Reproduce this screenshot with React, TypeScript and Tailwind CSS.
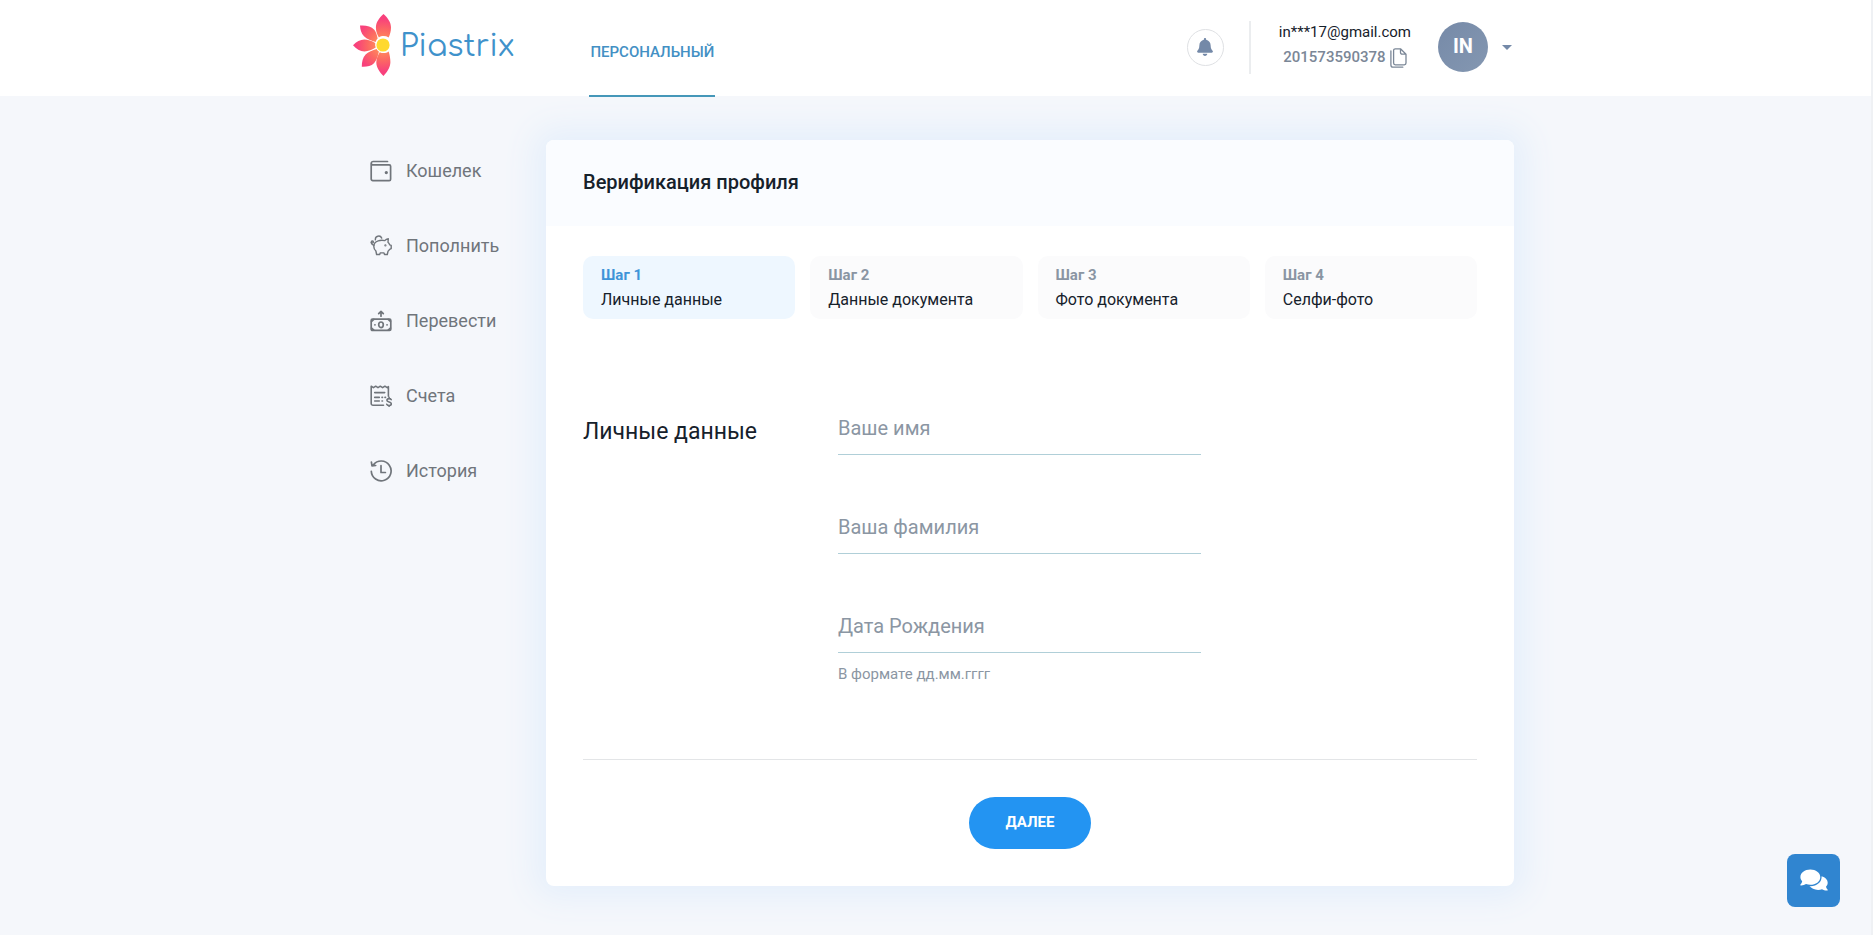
import { useState } from 'react';
import { FaBell } from 'react-icons/fa';
import { clsx } from 'clsx';

const steps = [
  { title: 'Шаг 1', label: 'Личные данные' },
  { title: 'Шаг 2', label: 'Данные документа' },
  { title: 'Шаг 3', label: 'Фото документа' },
  { title: 'Шаг 4', label: 'Селфи-фото' },
];

const menu = [
  { label: 'Кошелек', icon: WalletIcon },
  { label: 'Пополнить', icon: PiggyIcon },
  { label: 'Перевести', icon: TransferIcon },
  { label: 'Счета', icon: InvoiceIcon },
  { label: 'История', icon: HistoryIcon },
];

const iconProps = {
  className: 'size-[22px] shrink-0',
  viewBox: '0 0 22 22',
  fill: 'none',
  stroke: 'currentColor',
  strokeWidth: 1.7,
  strokeLinecap: 'round',
  strokeLinejoin: 'round',
} as const;

function WalletIcon() {
  return (
    <svg {...iconProps}>
      <path d="M17.5 1.5H3A1.8 1.8 0 0 0 1.2 3.2V19a1.6 1.6 0 0 0 1.6 1.6h16.4a1.4 1.4 0 0 0 1.4-1.4V6.3a1.4 1.4 0 0 0-1.4-1.4H3.2A1.8 1.8 0 0 1 1.2 3.2" />
      <circle cx="16.3" cy="12.6" r="0.8" fill="currentColor" />
    </svg>
  );
}

function PiggyIcon() {
  return (
    <svg {...iconProps} strokeWidth={1.4}>
      <path d="M8.2 5.8c-2.6.8-4.4 3-4.4 5.600 0 2 .9 3.500 2.100 4.600l.7 3.500h3.100l.5-1.600h3.800l.5 1.600h2.800l.7-3.200c.7-.6 1.200-1.200 1.600-2l1.600-.7v-3.200l-1.500-.6c-.4-1-.9-1.800-1.700-2.500l.3-3.600c-1.500.2-2.700.9-3.500 1.900-1.900-.4-4.500-.4-6.600.2z" />
      <path d="M5.400 4.800a3.300 3.300 0 0 1 6.300-1.700M3.900 10.200C1.900 9.800 1 8.300 1.400 6.800c.3-1.100 2-1.100 2 .1 0 1-1.400 1.300-2.300.5" />
      <circle cx="15.400" cy="10.400" r="0.400" fill="currentColor" />
    </svg>
  );
}

function TransferIcon() {
  return (
    <svg {...iconProps}>
      <rect x="1.200" y="9.200" width="19.600" height="11.200" rx="1.200" />
      <path d="M11 6.200V1.700M8.700 3.600 11 1.400l2.300 2.200" />
      <ellipse cx="11" cy="14.800" rx="2.300" ry="2.800" />
      <path d="M4.900 14.800h.1M17 14.800h.1M1.600 11.500l2.200-2.100M20.400 11.500l-2.200-2.100M1.600 18.100l2.200 2.100M20.400 18.100l-2.200 2.100" />
    </svg>
  );
}

function InvoiceIcon() {
  return (
    <svg {...iconProps} strokeWidth={1.6}>
      <path d="M13.500 20.300H3a1.800 1.800 0 0 1-1.800-1.800V1.200l2.200 1.500 2.300-1.500L8 2.700l2.300-1.500 2.300 1.500 2.300-1.500 2.300 1.500 1.200-1v9.600M4.700 7.600h10M4.700 12.400h4.600M4.700 16h4.600M12 12.400h.5M15 12.400h.5M12 16h.5" />
      <path d="M21.200 14.600c-.5-.8-1.300-1-2.100-1-1.200 0-2.200.6-2.200 1.700 0 2.400 4.400 1.100 4.400 3.500 0 1.100-1 1.700-2.200 1.700-.9 0-1.800-.4-2.300-1.200M19.100 12.300v1.200M19.100 20.600v1" />
    </svg>
  );
}

function HistoryIcon() {
  return (
    <svg {...iconProps}>
      <path d="M1.300 11.300A9.900 9.900 0 1 0 3.400 4.800M1.400 2.200l.6 3.600 3.700-.3M11 5.700v6.800h4.400" />
    </svg>
  );
}

function CopyIcon() {
  return (
    <svg
      className="h-5 w-[17px]"
      viewBox="0 0 17 20"
      fill="none"
      stroke="currentColor"
      strokeWidth={1.3}
      strokeLinejoin="round"
      strokeLinecap="round"
    >
      <path d="M10.500.8H5.300A1.700 1.700 0 0 0 3.600 2.500v12.600a1.700 1.700 0 0 0 1.700 1.700h9a1.700 1.700 0 0 0 1.700-1.700V6.200zM10.500.8v3.700a1.700 1.700 0 0 0 1.700 1.700H16" />
      <path d="M.9 2.800v14.100a2.300 2.300 0 0 0 2.300 2.300h9.600" />
    </svg>
  );
}

function Flower() {
  return (
    <svg className="h-[62px] w-[38px]" viewBox="0 0 38 62">
      <defs>
        <radialGradient id="petal" gradientUnits="userSpaceOnUse" cx="30" cy="31" r="31">
          <stop offset="0.2" stopColor="#ff8a5c" />
          <stop offset="0.5" stopColor="#fc6863" />
          <stop offset="0.85" stopColor="#f8417c" />
        </radialGradient>
      </defs>
      <g fill="url(#petal)">
        <path d="M30.500 0c4.500 4 7.500 8.500 7.500 13.500 0 3.800-1 7.200-2.300 9.900-3.400-1.800-7.300-1.700-9.800.1-1.700-3-3-6.200-3-10C22.900 8.500 26 4 30.500 0z" />
        <path d="M7 11.500c5.800-.4 11 .5 14.300 4.200 1.600 1.800 2.700 5.300 3.400 8.700-1.100 1-1.700 2.200-2 3.500-4-1-8.900-2.800-11.700-5.600C8.200 19.300 7.200 15.500 7 11.500z" />
        <path d="M0 31.300c3.500-3.500 7.200-5.700 11.300-5.700 3.400 0 7.700 1.600 10.900 3.300-.2 1.700 0 3.200.5 4.600-3.200 2-7.400 3.900-11.100 3.900C7 37.400 3.300 35.200 0 31.300z" />
        <path d="M8.800 52.800c0-5 .9-9.300 3.800-12.300 2.500-2.600 7.200-4.500 11-5.500.5 1 1.300 1.900 2.300 2.600-.8 4.200-2.300 9-4.900 11.700-3 3-7.300 3.700-12.200 3.500z" />
        <path d="M30.500 62c-4-4-7.200-8.700-7.200-13.500 0-3.600 1.500-7 3.400-10.300 3 1.300 6.400 1.100 9-.7 1 3.300 1.700 7 1.700 10.600 0 5-2.900 9.900-6.900 13.900z" />
      </g>
      <circle cx="30" cy="31" r="6.600" fill="#ffd92f" />
    </svg>
  );
}

function ChatIcon() {
  return (
    <svg className="h-[22px] w-7" viewBox="0 0 28 22" fill="#fff">
      <path d="M10.300.6c5.500 0 10 3.300 10 7.600s-4.500 7.600-10 7.600c-1.500 0-3-.3-4.300-.7-1.500 1-3.300 1.400-5.300 1.300-.5 0-.5-.6-.2-.9.900-.9 1.500-2.100 1.700-3.300C1 11 .4 9.600.4 8.200c0-4.300 4.400-7.600 9.900-7.600z" />
      <path d="M21.600 7.200c3.700 1 6.100 3.500 6.100 6.500 0 1.500-.6 2.900-1.700 4 .2 1.200.8 2.100 1.500 2.900.4.400.3 1-.3 1-1.900.1-3.700-.4-5.200-1.300-1.200.4-2.500.6-3.900.6-3.700 0-6.900-1.500-8.600-3.800 7.200.4 12.500-3.900 12.100-9.900z" />
    </svg>
  );
}

interface FieldProps {
  id: string;
  label: string;
  hint?: string;
}

function Field({ id, label, hint }: FieldProps) {
  return (
    <div>
      <div className="relative">
        <input
          id={id}
          type="text"
          placeholder=" "
          className="peer block h-[51px] w-full border-b border-[#b0cfd8] bg-transparent text-xl outline-none"
        />
        {/* Label sits over the empty input and hides once something is typed */}
        <label
          htmlFor={id}
          className="invisible absolute inset-0 flex cursor-text items-center pb-[3px] text-xl text-[#8b96a3] peer-placeholder-shown:visible"
        >
          {label}
        </label>
      </div>
      {hint && <p className="mt-[11px] text-[15px] leading-5 text-[#8b96a3]">{hint}</p>}
    </div>
  );
}

export default function App() {
  const [step, setStep] = useState(0);

  return (
    <div className="min-h-screen border-r-2 border-[#eff1f4] bg-[#f5f7fb] font-['Roboto',sans-serif] text-[#16212b]">
      {/* Header */}
      <header className="bg-white">
        <div className="mx-auto flex h-24 max-w-[1165px] items-start pr-1">
          <a href="#" className="flex items-center gap-[9px] pt-[14px]">
            <Flower />
            <span className="pt-1 font-['Comfortaa','Lato',sans-serif] text-[30px] leading-10 text-[#3f92cb]">
              Piastrix
            </span>
          </a>
          <nav className="ml-[75px]">
            <a
              href="#"
              className="flex h-[97px] items-center border-b-2 border-[#4396b8] px-px pt-2.5 text-[15px] font-medium text-[#4390c4]"
            >
              ПЕРСОНАЛЬНЫЙ
            </a>
          </nav>

          <div className="ml-auto flex h-[94px] items-center">
            <button
              type="button"
              aria-label="Уведомления"
              className="flex size-[37px] items-center justify-center rounded-full border border-[#dfe1e4] text-[#7489a8]"
            >
              <FaBell size={18} />
            </button>
            <div className="ml-[25px] h-[53px] w-0.5 bg-[#ebedef]" />
            <div className="ml-7 flex flex-col items-center pb-1">
              <span className="text-[15px] leading-[25px]">in***17@gmail.com</span>
              <button
                type="button"
                className="flex items-center gap-1 text-[15px] leading-[25px] font-medium text-[#7b8797]"
              >
                201573590378
                <CopyIcon />
              </button>
            </div>
            <button type="button" className="ml-[27px] flex items-center gap-3.5 pr-0.5">
              <span className="flex size-[50px] items-center justify-center rounded-full bg-linear-to-br from-[#768aa8] to-[#8497b1] pb-0.5 text-xl font-bold text-white">
                IN
              </span>
              <svg className="h-[5px] w-2.5 text-[#7489a8]" viewBox="0 0 10 5" fill="currentColor">
                <path d="M0 0h10L5 5z" />
              </svg>
            </button>
          </div>
        </div>
      </header>

      <div className="mx-auto flex max-w-[1165px] items-start pt-11 pr-1 pb-12">
        {/* Side menu */}
        <aside className="w-[193px] shrink-0 pt-4 pl-[17px]">
          <ul className="space-y-[45px]">
            {menu.map(({ label, icon: Icon }) => (
              <li key={label}>
                <a href="#" className="flex h-[30px] items-center gap-3.5 text-lg text-[#70757b]">
                  <Icon />
                  {label}
                </a>
              </li>
            ))}
          </ul>
        </aside>

        {/* Verification card */}
        <main className="min-w-0 flex-1 overflow-hidden rounded-lg bg-white shadow-[0_0_32px_12px_#e5effb]">
          <div className="h-[86px] bg-[#fafcff] px-[37px] pt-7">
            <h1 className="text-xl leading-7 font-medium">Верификация профиля</h1>
          </div>

          <div className="px-[37px] pt-[30px] pb-[37px]">
            <div className="grid grid-cols-4 gap-[15px]">
              {steps.map((item, index) => (
                <button
                  key={item.title}
                  type="button"
                  onClick={() => setStep(index)}
                  className={clsx(
                    'h-[63px] rounded-[10px] px-[18px] pb-px text-left',
                    index === step ? 'bg-[#eef7ff]' : 'bg-[#fbfbfc]'
                  )}
                >
                  <span
                    className={clsx(
                      'block text-[15px] leading-6 font-bold',
                      index === step ? 'text-[#3f94d8]' : 'text-[#8a95a3]'
                    )}
                  >
                    {item.title}
                  </span>
                  <span className="block text-base leading-[25px]">{item.label}</span>
                </button>
              ))}
            </div>

            <form onSubmit={(e) => e.preventDefault()}>
              <div className="mt-[85px] flex border-b border-[#e3e5e7] pb-[75px]">
                <h2 className="w-[255px] shrink-0 pt-3 text-[23px] leading-8">Личные данные</h2>
                <div className="w-[363px] space-y-12">
                  <Field id="first-name" label="Ваше имя" />
                  <Field id="last-name" label="Ваша фамилия" />
                  <Field id="birth-date" label="Дата Рождения" hint="В формате дд.мм.гггг" />
                </div>
              </div>
              <div className="flex justify-center pt-[37px]">
                <button
                  type="submit"
                  className="h-[52px] w-[122px] rounded-full bg-[#2394f2] pb-0.5 text-[15px] font-bold text-white"
                >
                  ДАЛЕЕ
                </button>
              </div>
            </form>
          </div>
        </main>
      </div>

      <button
        type="button"
        aria-label="Чат"
        className="fixed right-[33px] bottom-7 flex size-[53px] items-center justify-center rounded-lg bg-[#3085d0] pb-0.5"
      >
        <ChatIcon />
      </button>
    </div>
  );
}
